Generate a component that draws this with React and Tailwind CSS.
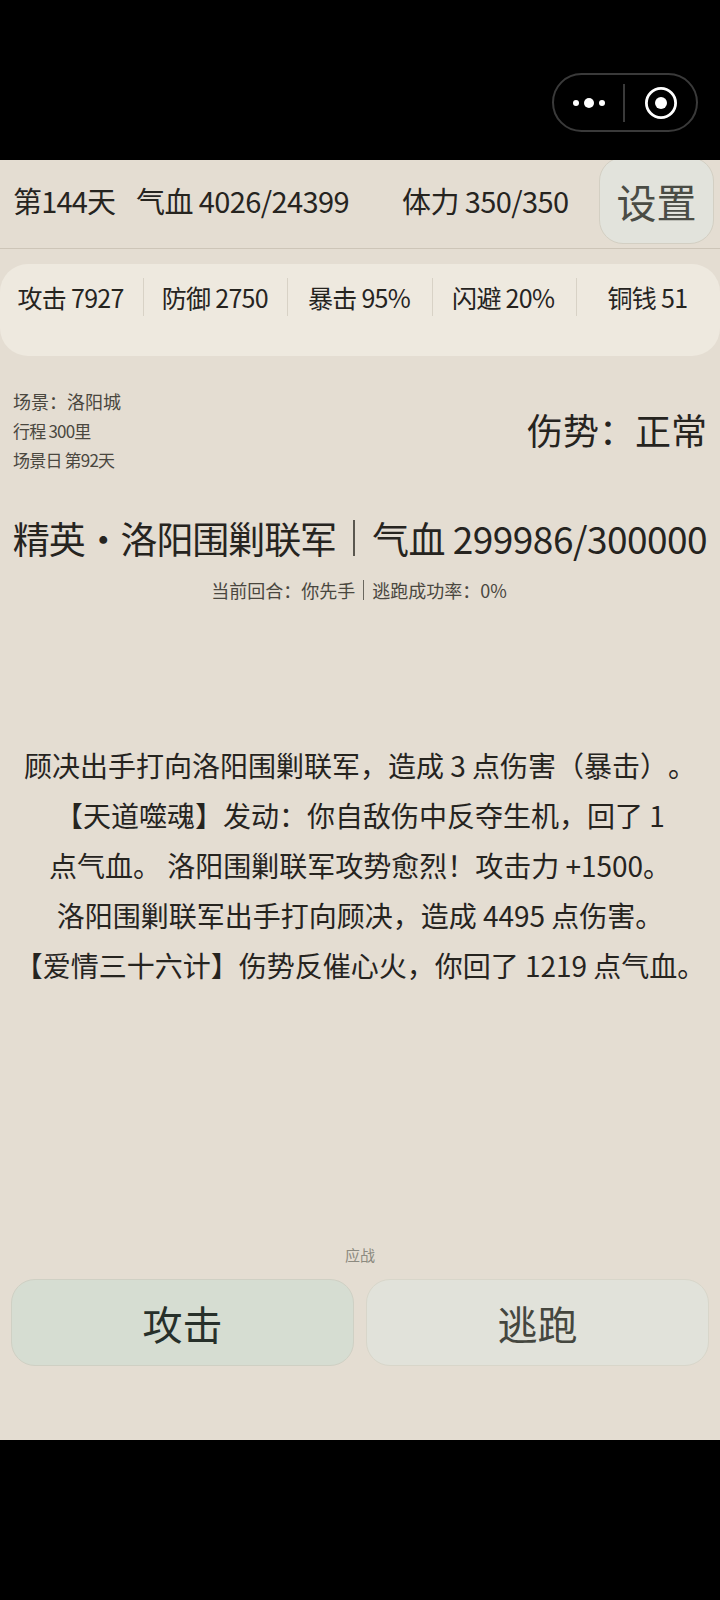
const FONT = "font-['Noto_Sans_CJK_SC','Noto_Sans',sans-serif]";

// full-width punctuation, written as escapes
const COLON = "\uFF1A";
const COMMA = "\uFF0C";
const BANG = "\uFF01";
const LP = "\uFF08";
const RP = "\uFF09";

const stats = ["攻击 7927", "防御 2750", "暴击 95%", "闪避 20%", "铜钱 51"];

const battleLog = [
  `顾决出手打向洛阳围剿联军${COMMA}造成 3 点伤害${LP}暴击${RP}。`,
  `【天道噬魂】发动${COLON}你自敌伤中反夺生机${COMMA}回了 1`,
  `点气血。 洛阳围剿联军攻势愈烈${BANG}攻击力 +1500。`,
  `洛阳围剿联军出手打向顾决${COMMA}造成 4495 点伤害。`,
  `【爱情三十六计】伤势反催心火${COMMA}你回了 1219 点气血。`,
];

function CapsuleMenu() {
  return (
    <div className="flex h-[59px] w-[146px] items-center rounded-full border-2 border-[#3a3a3a]">
      <div className="flex w-[69px] items-center justify-center gap-[5px]">
        <span className="h-[6px] w-[6px] rounded-full bg-white" />
        <span className="h-[10px] w-[10px] rounded-full bg-white" />
        <span className="h-[6px] w-[6px] rounded-full bg-white" />
      </div>
      <div className="h-[38px] w-[2px] bg-[#3a3a3a]" />
      <div className="flex flex-1 items-center justify-center">
        <svg width="32" height="32" viewBox="0 0 32 32">
          <circle cx="16" cy="16" r="14.6" fill="none" stroke="#fff" strokeWidth="2.8" />
          <circle cx="16" cy="16" r="6" fill="#fff" />
        </svg>
      </div>
    </div>
  );
}

export default function App() {
  return (
    <div className={`h-[1600px] w-[720px] overflow-hidden bg-black ${FONT}`}>
      <div className="flex h-[160px] items-end justify-end pb-[28px] pr-[22px]">
        <CapsuleMenu />
      </div>

      <main className="flex h-[1280px] flex-col overflow-hidden bg-[#e4ddd2] text-[#26241f]">
        <header className="flex h-[89px] items-start border-b border-[#cdc5b8] pl-[13px] pr-[6px]">
          <span className="mt-[19px] w-[123px] text-[29px] leading-[42px] tracking-[-0.8px]">第144天</span>
          <span className="mt-[19px] w-[266px] text-[29px] leading-[42px] tracking-[-0.6px]">气血 4026/24399</span>
          <span className="mt-[19px] text-[29px] leading-[42px] tracking-[-0.6px]">体力 350/350</span>
          <button className="ml-auto -mt-[3px] flex h-[87px] w-[115px] items-center justify-center rounded-[24px] border border-[#d3cfc3] bg-[#e2e3dc] text-[40px] leading-none text-[#4a4c45]">
            设置
          </button>
        </header>

        <section className="mt-[15px] flex h-[92px] items-start rounded-[28px] bg-[#eee9df] pt-[14px]">
          {stats.map((stat, i) => (
            <div
              key={stat}
              className={`flex h-[38px] flex-1 items-center justify-center pr-[2px] text-[25px] leading-none tracking-[-0.7px] ${i < 4 ? "border-r border-[#d8d2c6]" : ""}`}
            >
              {stat}
            </div>
          ))}
        </section>

        <section className="mt-[31px] flex items-center justify-between px-[13px]">
          <div className="text-[18px] leading-[29px] text-[#4a473f]">
            <p>场景{COLON}洛阳城</p>
            <p className="text-[17px] tracking-[-0.8px]">行程 300里</p>
            <p className="text-[17px] tracking-[-0.8px]">场景日 第92天</p>
          </div>
          <div className="mb-[3px] text-[36px] leading-[50px]">伤势{COLON}正常</div>
        </section>

        <section className="mt-[36px] flex items-center justify-center whitespace-nowrap text-[37px] leading-[56px]">
          <span className="tracking-[-1.1px]">精英・洛阳围剿联军</span>
          <span className="mx-[17px] h-[36px] w-[2px] bg-[#5a574f]" />
          <span className="tracking-[-0.5px]">气血 299986/300000</span>
        </section>

        <p className="mt-[9px] flex items-center justify-center pr-[2px] text-[18px] leading-[30px] text-[#4a473f]">
          当前回合{COLON}你先手
          <span className="mx-[8px] h-[20px] w-px bg-[#6a675e]" />
          逃跑成功率{COLON}0%
        </p>

        <div className="mt-[135px] text-center text-[28px] leading-[50px] [text-spacing-trim:space-all]">
          {battleLog.map((line) => (
            <p key={line} className="whitespace-nowrap">
              {line}
            </p>
          ))}
        </div>

        <div className="mt-auto pb-[74px]">
          <p className="text-center text-[15px] leading-[24px] text-[#8c8a80]">应战</p>
          <div className="mt-[12px] flex gap-[12px] px-[11px]">
            <button className="h-[87px] flex-1 rounded-[24px] border border-[#cfd0c4] bg-[#d6ddd2] text-[40px] text-[#27302a]">
              攻击
            </button>
            <button className="h-[87px] flex-1 rounded-[24px] border border-[#d8d6ca] bg-[#e1e2da] text-[40px] text-[#45473f]">
              逃跑
            </button>
          </div>
        </div>
      </main>
    </div>
  );
}
